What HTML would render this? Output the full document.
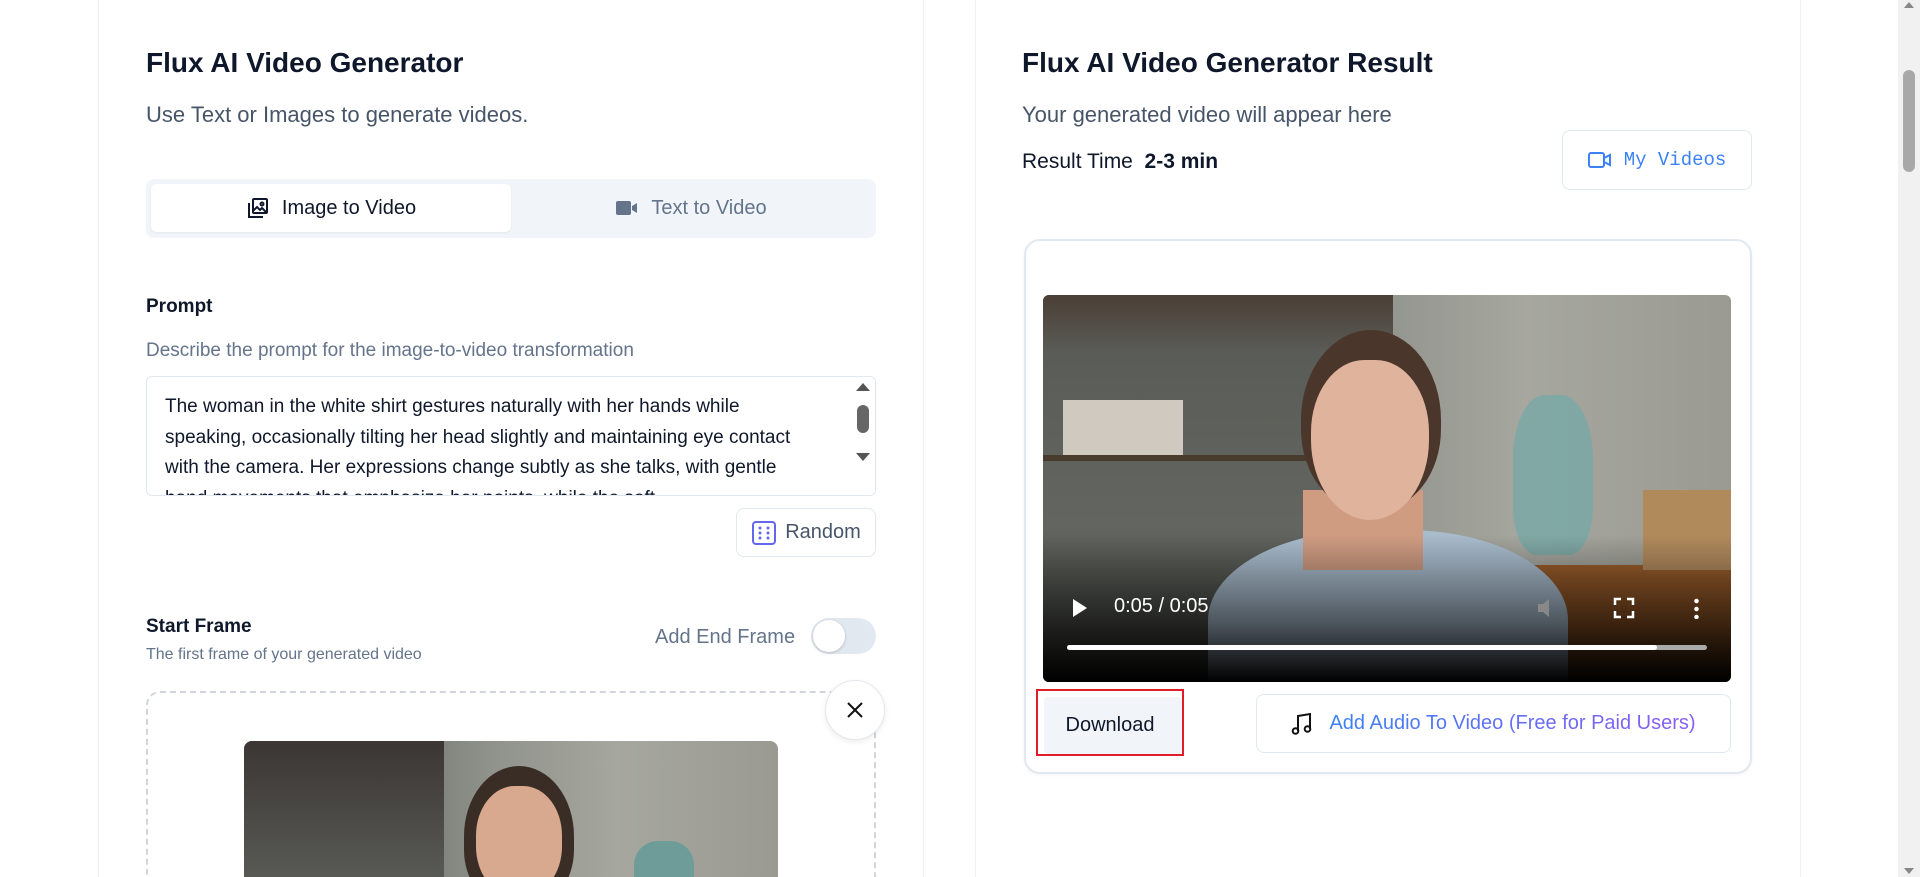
<!DOCTYPE html>
<html><head><meta charset="utf-8"><style>
*{box-sizing:border-box;margin:0;padding:0}
html,body{width:1920px;height:877px;overflow:hidden}
body{background:#fff;font-family:"Liberation Sans",sans-serif;position:relative;color:#0f172a}
.abs{position:absolute}
.card{position:absolute;top:-20px;height:920px;border:1px solid #eef0f3;border-radius:22px;background:#fff;box-shadow:0 1px 3px rgba(0,0,0,.04)}
h1{position:absolute;font-size:28px;font-weight:600;color:#0f172a;white-space:nowrap}
.sub{position:absolute;font-size:22px;color:#475569;white-space:nowrap}
.scene{position:absolute;overflow:hidden;background:linear-gradient(90deg,#4a4a44 0%,#6f726c 25%,#8e918a 45%,#a6a79f 70%,#9a9a92 100%)}
</style></head><body>
<div class="card" style="left:98px;width:826px"></div>
<div class="card" style="left:975px;width:826px"></div>

<h1 style="left:146px;top:47px">Flux AI Video Generator</h1>
<div class="sub" style="left:146px;top:102px">Use Text or Images to generate videos.</div>
<div class="abs" style="left:146px;top:179px;width:730px;height:59px;background:#f1f5f9;border-radius:8px"></div>
<div class="abs" style="left:151px;top:184px;width:360px;height:48px;background:#fff;border-radius:6px;box-shadow:0 1px 2px rgba(0,0,0,.06);display:flex;align-items:center;justify-content:center;font-size:20px;font-weight:500;color:#0f172a">
<svg width="24" height="24" viewBox="0 0 24 24" fill="none" stroke="#0f172a" stroke-width="2" style="margin-right:12px"><rect x="7" y="3" width="14" height="14" rx="1"/><path d="M3 7v14h14"/><circle cx="16" cy="8" r="1.5"/><path d="M7 15l4-4 3 3 2-2 5 5"/></svg>Image to Video</div>
<div class="abs" style="left:511px;top:184px;width:360px;height:48px;display:flex;align-items:center;justify-content:center;font-size:20px;color:#64748b">
<svg width="24" height="20" viewBox="0 0 24 20" style="margin-right:12px"><rect x="1" y="3" width="15" height="14" rx="2" fill="#64748b"/><path d="M17 8l5-3v10l-5-3z" fill="#64748b"/></svg>Text to Video</div>

<div class="abs" style="left:146px;top:296px;font-size:19px;font-weight:600">Prompt</div>
<div class="abs" style="left:146px;top:340px;font-size:19px;color:#64748b;white-space:nowrap">Describe the prompt for the image-to-video transformation</div>
<div class="abs" style="left:146px;top:376px;width:730px;height:120px;border:1px solid #e2e8f0;border-radius:6px;overflow:hidden">
<div style="position:absolute;left:18px;top:15px;width:650px;font-size:19px;line-height:30.5px;color:#0f172a">The woman in the white shirt gestures naturally with her hands while speaking, occasionally tilting her head slightly and maintaining eye contact with the camera. Her expressions change subtly as she talks, with gentle hand movements that emphasize her points, while the soft</div>
<div style="position:absolute;right:0;top:0;width:20px;height:120px;background:#fff"></div>
<div style="position:absolute;right:5px;top:6px;width:0;height:0;border-left:7px solid transparent;border-right:7px solid transparent;border-bottom:8px solid #555"></div>
<div style="position:absolute;right:6px;top:28px;width:12px;height:28px;background:#666;border-radius:6px"></div>
<div style="position:absolute;right:5px;top:76px;width:0;height:0;border-left:7px solid transparent;border-right:7px solid transparent;border-top:8px solid #555"></div>
</div>
<div class="abs" style="left:736px;top:508px;width:140px;height:49px;border:1px solid #e2e8f0;border-radius:8px;display:flex;align-items:center;justify-content:center;font-size:20px;color:#475569">
<svg width="26" height="26" viewBox="0 0 26 26" style="margin-right:8px"><rect x="2" y="2" width="22" height="22" rx="3" fill="none" stroke="#6366f1" stroke-width="2"/><g fill="#6366f1"><circle cx="9" cy="8" r="1.5"/><circle cx="17" cy="8" r="1.5"/><circle cx="9" cy="13" r="1.5"/><circle cx="17" cy="13" r="1.5"/><circle cx="9" cy="18" r="1.5"/><circle cx="17" cy="18" r="1.5"/></g></svg>Random</div>

<div class="abs" style="left:146px;top:616px;font-size:19px;font-weight:600">Start Frame</div>
<div class="abs" style="left:146px;top:646px;font-size:16px;color:#64748b">The first frame of your generated video</div>
<div class="abs" style="left:655px;top:626px;font-size:20px;color:#64748b">Add End Frame</div>
<div class="abs" style="left:811px;top:618px;width:65px;height:36px;border-radius:18px;background:#e2e8f0"><div style="position:absolute;left:2px;top:2px;width:32px;height:32px;border-radius:50%;background:#fff;box-shadow:0 1px 3px rgba(0,0,0,.2)"></div></div>
<div class="abs" style="left:146px;top:691px;width:730px;height:220px;border:2px dashed #d1d5db;border-radius:14px"></div>
<div class="scene" style="left:244px;top:741px;width:534px;height:150px;border-radius:8px 8px 0 0">
<div class="abs" style="left:0;top:0;width:200px;height:150px;background:linear-gradient(180deg,#3b3633,#5b5d58)"></div>
<div class="abs" style="left:220px;top:25px;width:110px;height:140px;border-radius:50% 50% 40% 40%;background:#3a2d26"></div>
<div class="abs" style="left:232px;top:45px;width:86px;height:110px;border-radius:45%;background:#d9a98f"></div>
<div class="abs" style="left:390px;top:100px;width:60px;height:60px;border-radius:40%;background:#6e9c98"></div>
</div>
<div class="abs" style="left:825px;top:680px;width:60px;height:60px;border-radius:50%;background:#fff;border:1px solid #e5e7eb;box-shadow:0 2px 6px rgba(0,0,0,.08);display:flex;align-items:center;justify-content:center"><svg width="20" height="20" viewBox="0 0 20 20" stroke="#111" stroke-width="2"><path d="M3 3l14 14M17 3L3 17"/></svg></div>

<h1 style="left:1022px;top:47px">Flux AI Video Generator Result</h1>
<div class="sub" style="left:1022px;top:102px">Your generated video will appear here</div>
<div class="abs" style="left:1022px;top:150px;font-size:21px;white-space:nowrap">Result Time&nbsp; <b style="font-weight:600">2-3 min</b></div>
<div class="abs" style="left:1562px;top:130px;width:190px;height:60px;border:1px solid #e2e8f0;border-radius:8px;display:flex;align-items:center;justify-content:center;font-family:'Liberation Mono',monospace;font-size:19px;color:#3b82f6">
<svg width="24" height="18" viewBox="0 0 24 18" fill="none" stroke="#3b82f6" stroke-width="2" style="margin-right:12px"><rect x="1" y="2" width="15" height="14" rx="2"/><path d="M16 7l6-3v10l-6-3"/></svg>My Videos</div>
<div class="abs" style="left:1024px;top:239px;width:728px;height:535px;border:2px solid #e2e8f0;border-radius:16px;box-shadow:0 1px 3px rgba(0,0,0,.05)"></div>
<div class="scene" style="left:1043px;top:295px;width:688px;height:387px;border-radius:6px">
<div class="abs" style="left:0;top:0;width:350px;height:387px;background:linear-gradient(180deg,#4b3f36 0%,#5a5c57 15%,#636660 60%,#3d3f3a 100%)"></div>
<div class="abs" style="left:20px;top:105px;width:120px;height:60px;background:#cfc9bf"></div>
<div class="abs" style="left:0;top:160px;width:350px;height:6px;background:#4a3b2f"></div>
<div class="abs" style="left:480px;top:270px;width:208px;height:117px;background:linear-gradient(180deg,#9b5e2c,#6d3e18)"></div>
<div class="abs" style="left:600px;top:195px;width:88px;height:80px;background:#b18a5c"></div>
<div class="abs" style="left:470px;top:100px;width:80px;height:160px;border-radius:40% 40% 30% 30%;background:#7aa8a6;opacity:.85"></div>
<div class="abs" style="left:165px;top:235px;width:360px;height:200px;border-radius:45% 45% 0 0;background:#a9bccd"></div>
<div class="abs" style="left:260px;top:195px;width:120px;height:80px;background:#cf9c82"></div>
<div class="abs" style="left:258px;top:35px;width:140px;height:180px;border-radius:50% 50% 45% 45%;background:#4a362b"></div>
<div class="abs" style="left:268px;top:65px;width:118px;height:160px;border-radius:45% 45% 50% 50%;background:#e0b39c"></div>
<div class="abs" style="left:0;top:240px;width:688px;height:147px;background:linear-gradient(180deg,rgba(0,0,0,0),rgba(0,0,0,.55) 60%,#000)"></div>
<div class="abs" style="left:30px;top:304px;width:0;height:0;border-top:9px solid transparent;border-bottom:9px solid transparent;border-left:14px solid #fff"></div>
<div class="abs" style="left:71px;top:300px;font-size:20px;color:#fff">0:05 / 0:05</div>
<svg class="abs" style="left:493px;top:302px" width="24" height="22" viewBox="0 0 24 22"><path d="M2 7h5l6-5v18l-6-5H2z" fill="#888"/></svg>
<svg class="abs" style="left:570px;top:302px" width="22" height="22" viewBox="0 0 22 22" fill="none" stroke="#fff" stroke-width="2.5"><path d="M2 8V2h6M14 2h6v6M20 14v6h-6M8 20H2v-6"/></svg>
<div class="abs" style="left:651px;top:302px;width:5px;height:22px;background:radial-gradient(circle,#fff 2px,transparent 2.5px) 0 0/5px 8px"></div>
<div class="abs" style="left:24px;top:350px;width:640px;height:5px;background:#aaa;border-radius:3px"><div style="width:590px;height:5px;background:#fff;border-radius:3px"></div></div>
</div>
<div class="abs" style="left:1036px;top:689px;width:148px;height:67px;border:2px solid #e11d2a"><div style="position:absolute;left:6px;top:6px;right:0;bottom:0;background:#f1f5f9;border-radius:4px;display:flex;align-items:center;justify-content:center;font-size:20px;color:#0f172a;padding-right:6px">Download</div></div>
<div class="abs" style="left:1256px;top:694px;width:475px;height:59px;border:1px solid #e2e8f0;border-radius:8px;display:flex;align-items:center;justify-content:center;font-size:20px">
<svg width="22" height="24" viewBox="0 0 22 24" fill="none" stroke="#111" stroke-width="2" style="margin-right:16px"><path d="M7 19V4l12-2v15"/><circle cx="4.5" cy="19" r="2.8"/><circle cx="16.5" cy="17" r="2.8"/></svg><span style="background:linear-gradient(90deg,#3b82f6,#8b5cf6);-webkit-background-clip:text;color:transparent">Add Audio To Video (Free for Paid Users)</span></div>

<div class="abs" style="left:1898px;top:0;width:22px;height:877px;background:#f1f1f1"></div>
<div class="abs" style="left:1903px;top:70px;width:12px;height:102px;background:#a8a8a8;border-radius:6px"></div>
<div class="abs" style="left:1904px;top:2px;width:0;height:0;border-left:5px solid transparent;border-right:5px solid transparent;border-bottom:6px solid #888"></div>
<div class="abs" style="left:1904px;top:868px;width:0;height:0;border-left:5px solid transparent;border-right:5px solid transparent;border-top:6px solid #888"></div>
</body></html>
